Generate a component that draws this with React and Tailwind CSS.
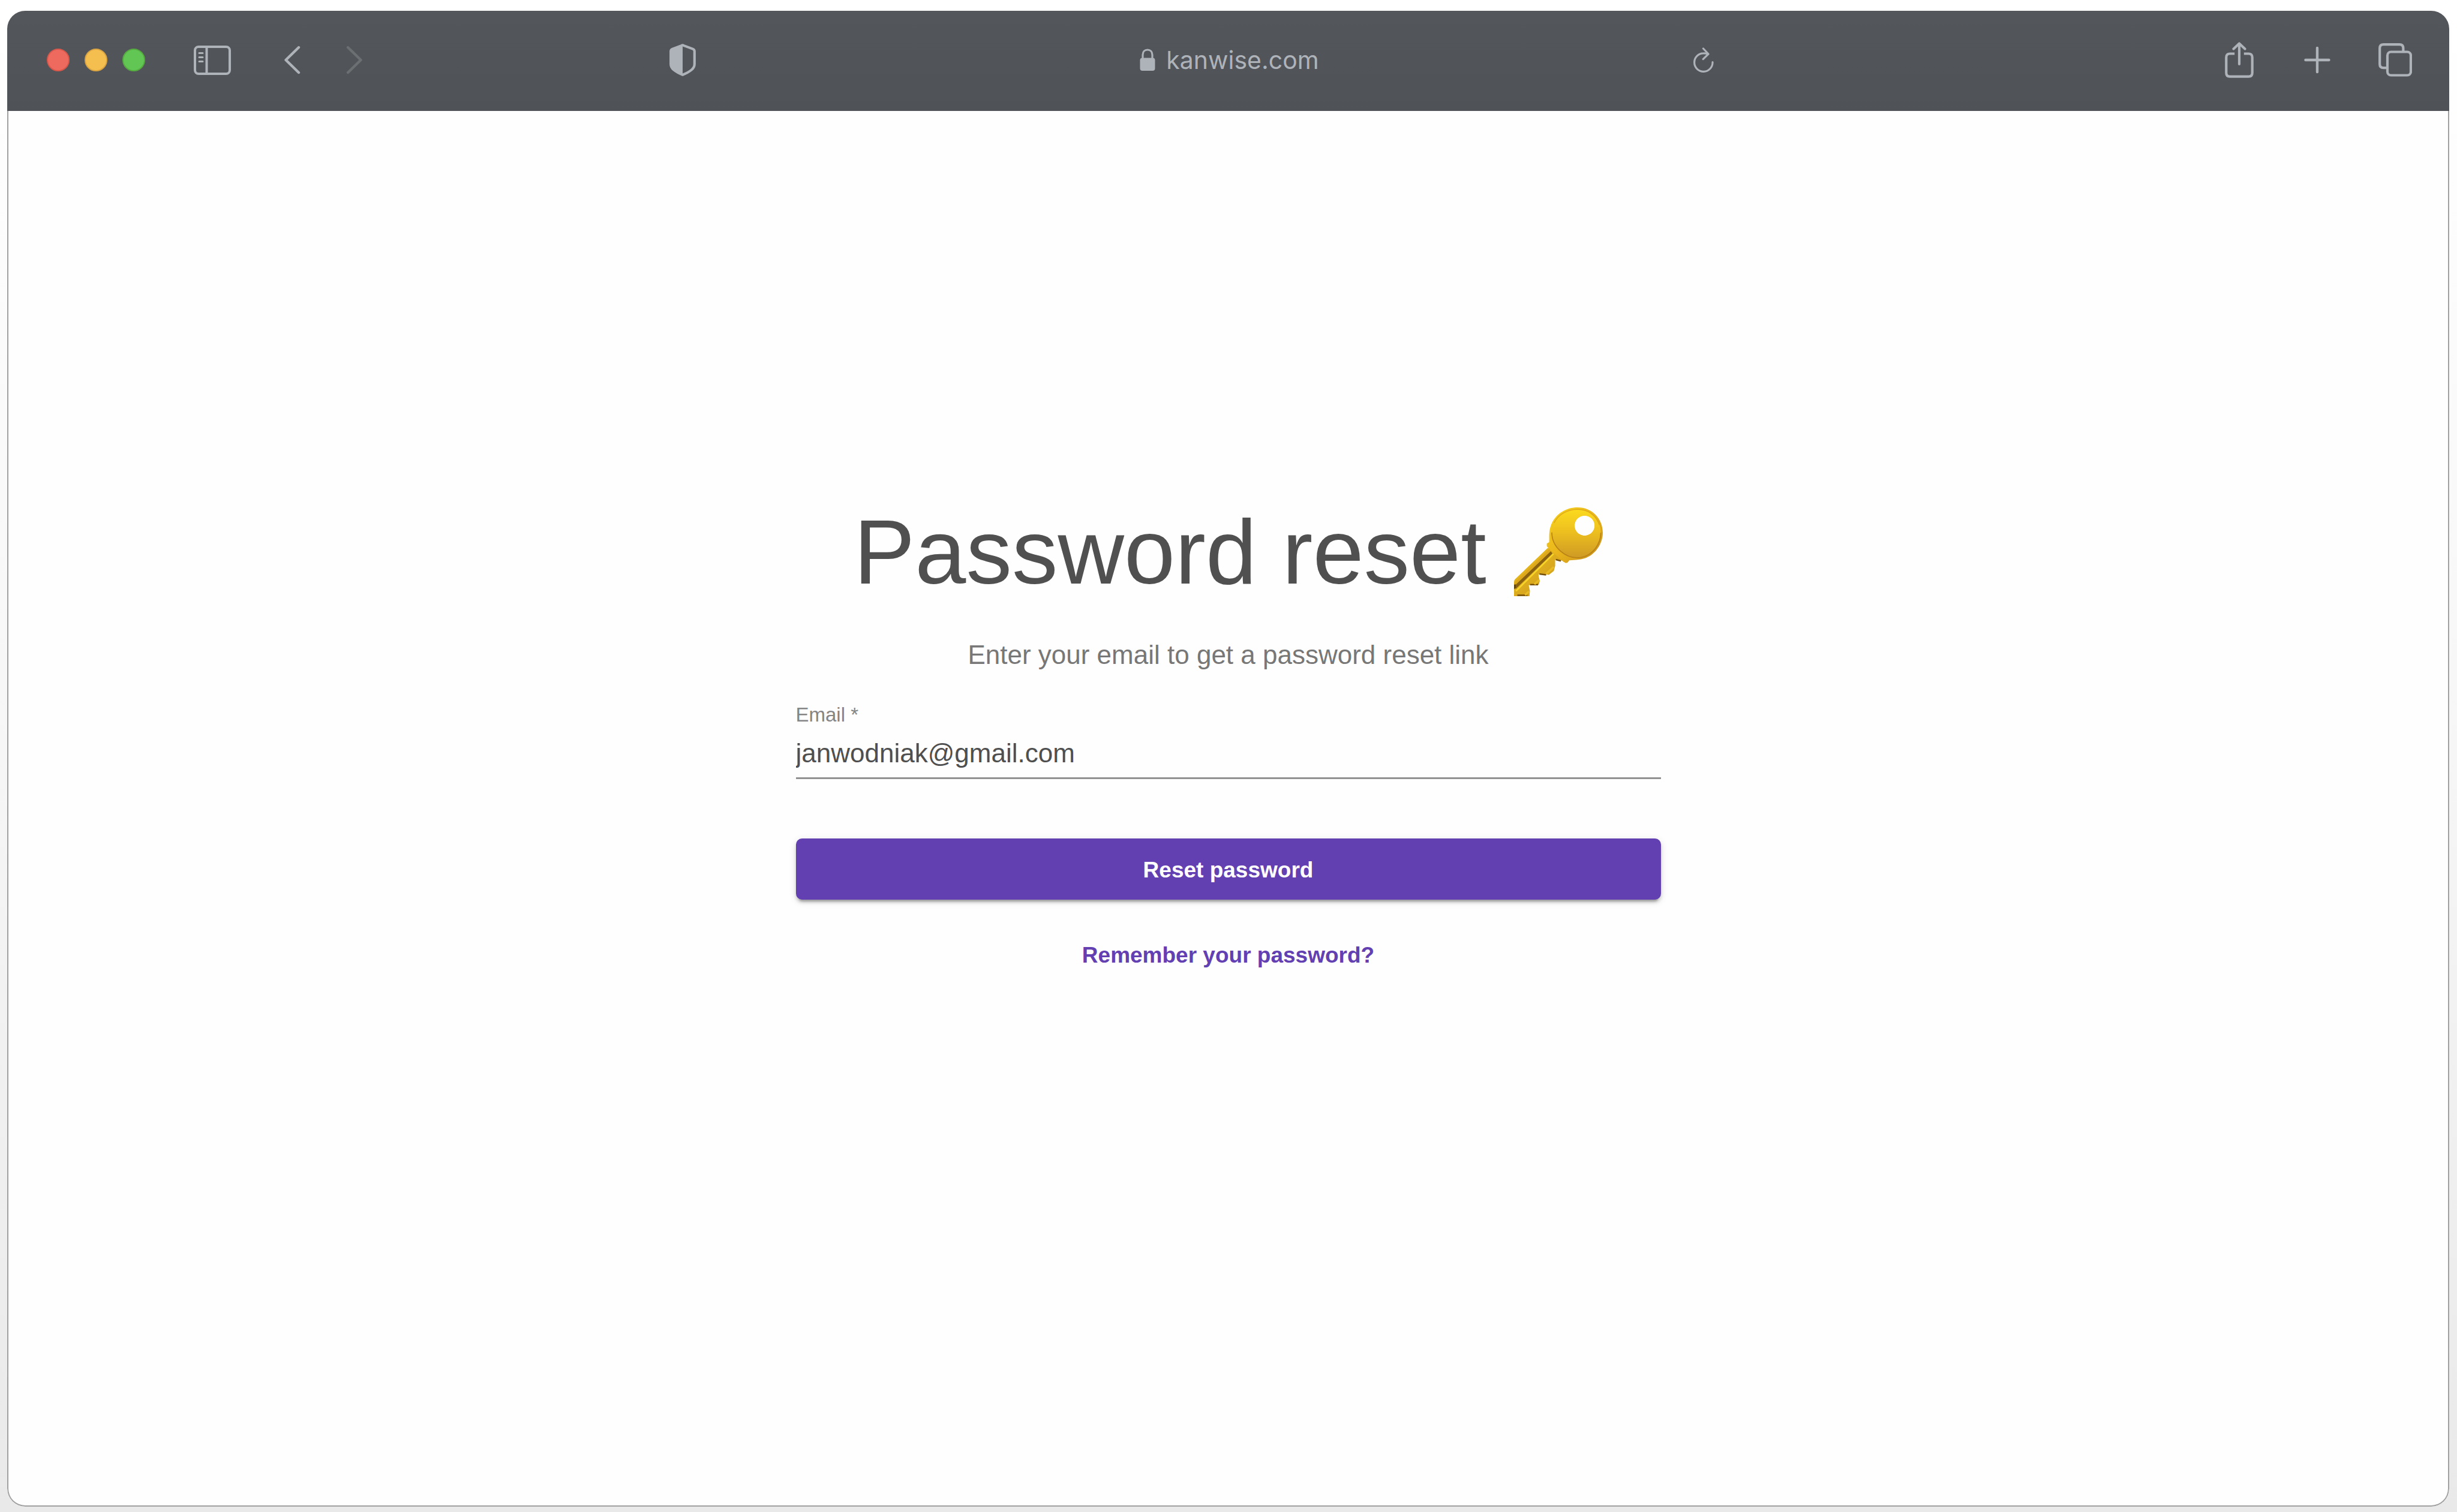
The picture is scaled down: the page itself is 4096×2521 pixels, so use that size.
import React from "react";

const TOOL = "flex items-center justify-center text-[#aeb2b9]";

function SidebarIcon() {
  return (
    <svg className="h-[49px] w-[62px]" viewBox="0 0 62 49" fill="none" stroke="currentColor" strokeWidth="4" aria-hidden="true">
      <rect x="2" y="2" width="58" height="45" rx="6" />
      <path d="M21.5 3v43" />
      <path d="M9 12.5h6M9 19.5h6M9 26.5h6" strokeWidth="3" strokeLinecap="round" />
    </svg>
  );
}

function ChevronIcon({ flip }) {
  return (
    <svg className="h-[48px] w-[28px]" viewBox="0 0 28 48" fill="none" stroke="currentColor" strokeWidth="4.4" strokeLinecap="round" strokeLinejoin="round" aria-hidden="true">
      <path d={flip ? "M3 3l21.500 21L3 45" : "M25 3L3.500 24 25 45"} />
    </svg>
  );
}

function ShieldIcon() {
  return (
    <svg className="h-[54px] w-[44px]" viewBox="0 0 44 54" fill="none" stroke="currentColor" strokeWidth="4.200" strokeLinejoin="round" aria-hidden="true">
      <path d="M22 2.300c1.200.2 2 .7 3 1.100L39 8.600c2 .8 2.800 1.800 2.800 4V34c0 4-2 7-5 9.500-4 3.300-9 6-14.800 8.200C16.200 49.500 11.200 46.800 7.200 43.500 4.200 41 2.200 38 2.200 34V12.600c0-2.200.8-3.200 2.800-4L19 3.400c1-.4 1.800-.9 3-1.100z" />
      <path d="M22 2.300V51.700C16.200 49.500 11.200 46.800 7.200 43.500 4.200 41 2.200 38 2.200 34V12.600c0-2.200.8-3.200 2.800-4L19 3.400z" fill="currentColor" stroke="none" />
    </svg>
  );
}

function LockIcon() {
  return (
    <svg className="h-[38px] w-[26px]" viewBox="0 0 26 38" fill="none" aria-hidden="true">
      <rect x="0.500" y="15.500" width="25" height="21.500" rx="4" fill="currentColor" />
      <path d="M5 17V10.500C5 5.500 8.300 2 13 2s8 3.500 8 8.500V17" stroke="currentColor" strokeWidth="3.200" />
    </svg>
  );
}

function ReloadIcon() {
  return (
    <svg className="h-[42px] w-[34px]" viewBox="0 0 34 42" fill="none" stroke="currentColor" strokeWidth="3.200" strokeLinecap="round" strokeLinejoin="round" aria-hidden="true">
      <path d="M32 24.500A15.200 15.200 0 1 1 16.800 9.900Q20.500 9.700 24.500 11" />
      <path d="M16.500 2l8.500 9-8.800 8.600" />
    </svg>
  );
}

function ShareIcon() {
  return (
    <svg className="h-[60px] w-[48px]" viewBox="0 0 48 60" fill="none" stroke="currentColor" strokeWidth="4.200" aria-hidden="true">
      <path d="M16.200 19.500H8.500c-4 0-6.200 2.200-6.200 6.200V51.500c0 4 2.200 6.200 6.200 6.200h31c4 0 6.200-2.200 6.200-6.200V25.700c0-4-2.200-6.200-6.200-6.200h-7.700" />
      <path d="M24 37V3M14.500 11.500L24 2.500l9.500 9" strokeLinecap="round" strokeLinejoin="round" />
    </svg>
  );
}

function PlusIcon() {
  return (
    <svg className="h-[46px] w-[44px]" viewBox="0 0 44 46" fill="none" stroke="currentColor" strokeWidth="4.400" strokeLinecap="round" aria-hidden="true">
      <path d="M22 3v40M2.500 23h39" />
    </svg>
  );
}

function TabsIcon() {
  return (
    <svg className="h-[56px] w-[56px]" viewBox="0 0 56 56" fill="none" stroke="currentColor" strokeWidth="4.200" aria-hidden="true">
      <rect x="15" y="14.500" width="39" height="39" rx="6" />
      <path d="M15 41.200H8.500c-4 0-6.300-2.300-6.300-6.300V8.500c0-4 2.300-6.300 6.300-6.300h26.600c4 0 6.300 2.300 6.300 6.300v6" />
    </svg>
  );
}

function KeyIcon() {
  return (
    <svg className="h-[148px] w-[148px] shrink-0" viewBox="0 0 531 531" role="img" aria-label="key">
      <defs>
        <linearGradient id="keyHead" x1="0" y1="0" x2="0" y2="1">
          <stop offset="0" stopColor="#fbda1e" />
          <stop offset="0.450" stopColor="#eec01f" />
          <stop offset="1" stopColor="#cf9a24" />
        </linearGradient>
        <linearGradient id="keyRim" x1="0" y1="0" x2="1" y2="1">
          <stop offset="0" stopColor="#f8d41c" />
          <stop offset="0.500" stopColor="#e9b51c" />
          <stop offset="1" stopColor="#c48a1a" />
        </linearGradient>
        <linearGradient id="keyBlade" x1="0" y1="0" x2="1" y2="1">
          <stop offset="0" stopColor="#f3c81c" />
          <stop offset="1" stopColor="#c48d1f" />
        </linearGradient>
      </defs>
      <path d="M200 244L6 430Q0 436 0 446V531H92L95 500 88 466 104 462H148L154 440 147 412V400H190L208 404 238 380 246 350V314L262 312 300 322 318 332 330 318 262 232z" fill="url(#keyBlade)" />
      <path d="M2 470L220 262 230 276 10 488z" fill="#8a620f" />
      <path d="M0 452L212 250 222 256 4 466z" fill="#dca71c" />
      <path d="M12 500L236 278" stroke="#f7d52a" strokeWidth="9" />
      <path d="M0 462v28l10-8v-22z" fill="#5d430c" />
      <path d="M20 526H80M96 462H144M152 398l40 6M250 312l30 8" stroke="#76510d" strokeWidth="9" fill="none" />
      <path d="M66 524l24-22M122 460l28-26M192 398l46-42" stroke="#e8ba24" strokeWidth="13" fill="none" />
      <path
        fillRule="evenodd"
        d="M381 0C466 0 531 66 531 152 531 214 490 280 430 302 390 316 352 314 322 318L312 334 296 326 212 250 196 232V216L210 208C212 176 206 146 222 104 250 36 312 0 381 0zM422 49a60 60 0 1 0 .1 0z"
        fill="url(#keyRim)"
      />
      <path
        fillRule="evenodd"
        d="M381 12C454 12 519 72 519 152 519 216 474 286 400 300 310 310 226 244 226 158 226 76 296 12 381 12zM422 49a60 60 0 1 0 .1 0z"
        fill="url(#keyHead)"
      />
      <path d="M226 150C226 240 312 312 400 300 474 286 519 216 519 152" fill="none" stroke="#b98216" strokeWidth="6" />
      <path d="M240 92C266 42 318 12 381 12S492 48 510 104" fill="none" stroke="#dda51a" strokeWidth="5" />
    </svg>
  );
}

function Toolbar() {
  return (
    <header className="grid h-[167px] grid-cols-[1fr_auto_1fr] items-center bg-linear-to-b from-[#53565a] to-[#4f5257] pr-[62px] pb-[3px] pl-[66px]">
      <div className="flex items-center">
        <div className="flex gap-[25px]">
          <span className="size-[38px] rounded-full border-2 border-[#d8574b] bg-[#ee6a5f]" />
          <span className="size-[38px] rounded-full border-2 border-[#d9a441] bg-[#f5bf4f]" />
          <span className="size-[38px] rounded-full border-2 border-[#55ab3f] bg-[#62c655]" />
        </div>
        <button type="button" aria-label="Show sidebar" className={`${TOOL} ml-[81px]`}>
          <SidebarIcon />
        </button>
        <button type="button" aria-label="Back" className={`${TOOL} ml-[88px]`}>
          <ChevronIcon />
        </button>
        <button type="button" aria-label="Forward" disabled className="ml-[76px] text-[#6c6f72]">
          <ChevronIcon flip />
        </button>
        <button type="button" aria-label="Privacy report" className={`${TOOL} ml-[511px]`}>
          <ShieldIcon />
        </button>
      </div>
      <div className="flex items-center gap-[18px] text-[#aeb2b9]">
        <LockIcon />
        <span className="font-[Inter,sans-serif] text-[41px] leading-[52px]">kanwise.com</span>
      </div>
      <div className="flex items-center justify-end">
        <button type="button" aria-label="Reload" className={`${TOOL} mr-auto ml-[624px]`}>
          <ReloadIcon />
        </button>
        <div className="flex items-center">
          <button type="button" aria-label="Share" className={`${TOOL} mr-[84px]`}>
            <ShareIcon />
          </button>
          <button type="button" aria-label="New tab" className={`${TOOL} mr-[80px]`}>
            <PlusIcon />
          </button>
          <button type="button" aria-label="Tab overview" className={TOOL}>
            <TabsIcon />
          </button>
        </div>
      </div>
    </header>
  );
}

export default function App() {
  return (
    <div className="flex min-h-screen flex-col bg-linear-to-b from-white via-[#f6f6f6] to-[#e9e9e9] pt-[18px] pr-[13px] pb-[9px] pl-[12px] font-['Liberation_Sans',Arial,sans-serif]">
      <div className="flex flex-1 flex-col overflow-hidden rounded-[30px] bg-[#fefefe]">
        <Toolbar />
        <main className="flex flex-1 flex-col items-center rounded-b-[30px] border-2 border-t-0 border-[#a0a0a0] pt-[643px]">
          <form className="flex w-[1442px] flex-col" onSubmit={(e) => e.preventDefault()}>
            <h1 className="flex items-center justify-center gap-[46px] text-[153px] leading-[184px] text-[#505050]">
              Password reset
              <KeyIcon />
            </h1>
            <p className="mt-[52px] text-center text-[44px] leading-[56px] text-[#777777]">
              Enter your email to get a password reset link
            </p>
            <label htmlFor="email" className="mt-[52px] text-[33px] leading-[40px] text-[#858585]">
              Email *
            </label>
            <input
              id="email"
              type="email"
              required
              defaultValue="janwodniak@gmail.com"
              className="mt-[3px] h-[84px] border-b-[3px] border-[#919191] bg-transparent text-[44px] leading-[52px] text-[#4f4f4f] outline-none"
            />
            <button
              type="submit"
              className="mt-[99px] h-[102px] rounded-[10px] bg-[#6340b1] pt-[4px] text-[37px] leading-[48px] font-bold text-white shadow-[0_8px_3px_-5px_rgba(0,0,0,0.2),0_5px_5px_0_rgba(0,0,0,0.14),0_3px_13px_0_rgba(0,0,0,0.12)]"
            >
              Reset password
            </button>
            <a href="#login" className="mt-[69px] self-center text-[37px] leading-[48px] font-bold text-[#6340b1]">
              Remember your password?
            </a>
          </form>
        </main>
      </div>
    </div>
  );
}
